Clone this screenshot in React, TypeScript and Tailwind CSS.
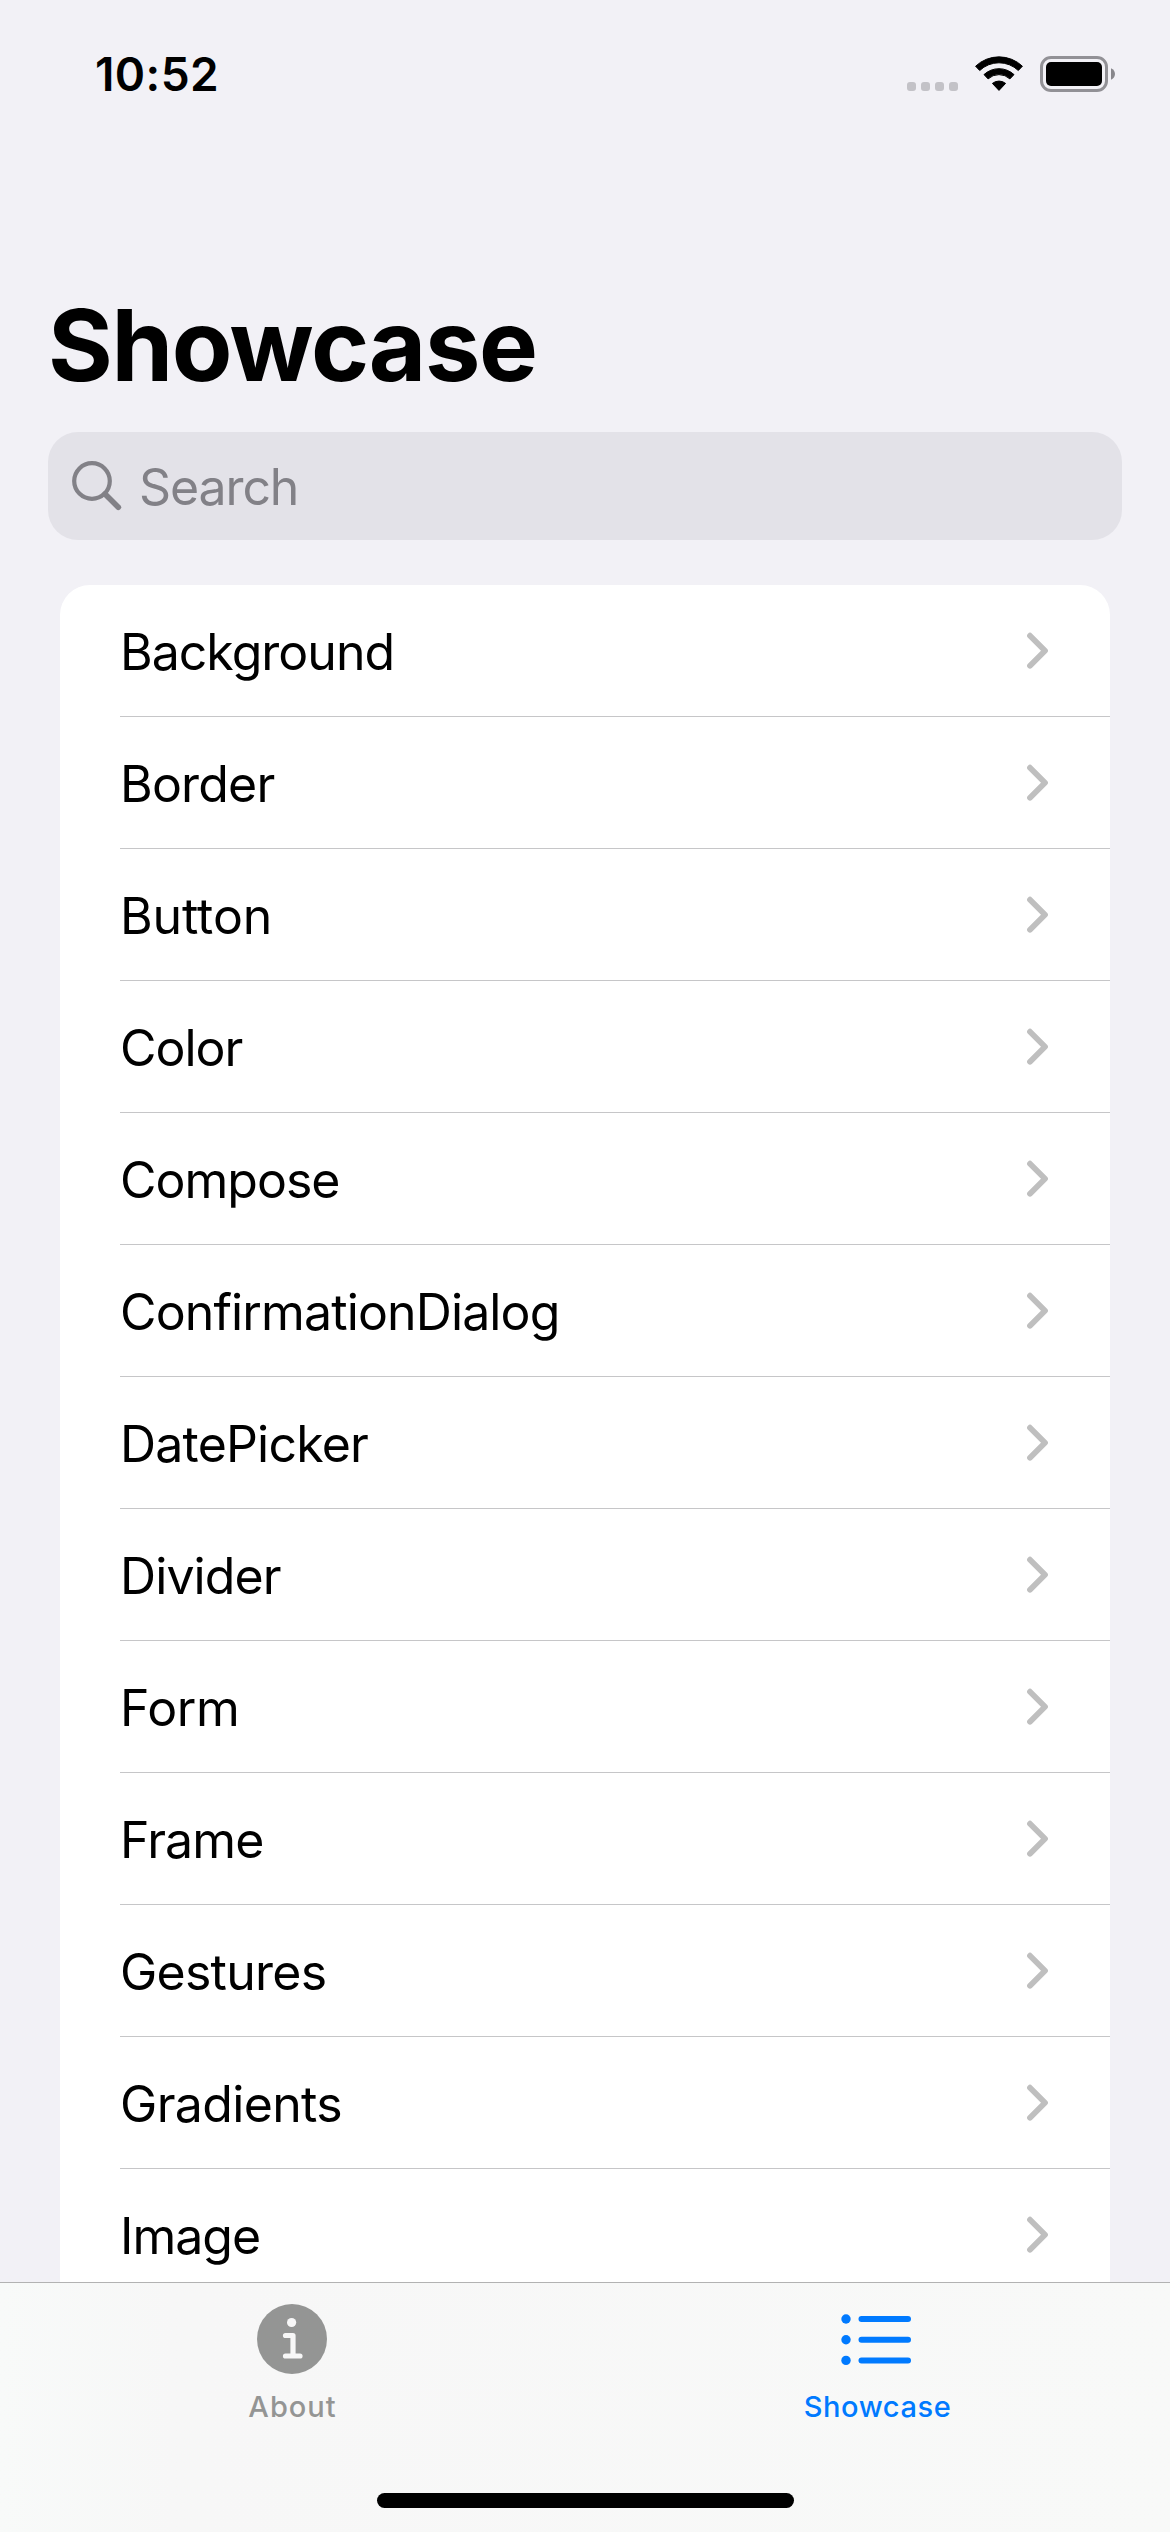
const rows = [
  { label: "Background", tracking: "tracking-[-1px]" },
  { label: "Border", tracking: "tracking-[-0.8px]" },
  { label: "Button", tracking: "tracking-[-0.1px]" },
  { label: "Color", tracking: "tracking-[-1px]" },
  { label: "Compose", tracking: "tracking-[-1px]" },
  { label: "ConfirmationDialog", tracking: "tracking-[-0.87px]" },
  { label: "DatePicker", tracking: "tracking-[-0.8px]" },
  { label: "Divider", tracking: "tracking-[-0.9px]" },
  { label: "Form", tracking: "tracking-[-0.4px]" },
  { label: "Frame", tracking: "tracking-[-0.9px]" },
  { label: "Gestures", tracking: "tracking-[-0.75px]" },
  { label: "Gradients", tracking: "tracking-[-0.65px]" },
  { label: "Image", tracking: "tracking-[-1px]" },
];

function StatusBar() {
  return (
    <div className="flex h-[141px] shrink-0 items-start justify-between pl-[95px] pr-[55px]">
      <div className="mt-[44px] text-[46px] font-semibold leading-[60px] tracking-[0.4px]">10:52</div>
      <div className="mt-[55px] flex h-[37px]">
        <div className="mt-[27px] flex gap-[5px]">
          {[0, 1, 2, 3].map((i) => (
            <span key={i} className="size-[9px] rounded-[3px] bg-[#c3c2c7]" />
          ))}
        </div>
        <svg className="ml-[17px] h-[37px] w-[48px]" viewBox="0 0 48 37">
          <path d="M0.6 11.2A34 34 0 0 1 47.4 11.2L43.3 15.5A28 28 0 0 0 4.7 15.5Z" stroke="#000" strokeWidth="1" strokeLinejoin="round" />
          <path d="M9 19.6A22 22 0 0 1 39 19.6L34.9 23.9A16 16 0 0 0 13.1 23.9Z" stroke="#000" strokeWidth="1" strokeLinejoin="round" />
          <path d="M17.4 28.4A10.5 10.5 0 0 1 30.6 28.4L24 35.4Z" stroke="#000" strokeWidth="1" strokeLinejoin="round" />
        </svg>
        <svg className="ml-[17px] h-[37px] w-[75px]" viewBox="0 0 75 37">
          <rect x="1.5" y="2.5" width="65" height="33" rx="9.5" fill="none" stroke="#929196" strokeWidth="3" />
          <rect x="6" y="7" width="56" height="24" rx="5" />
          <path d="M71 13.3C73.4 14.3 75 16.5 75 19S73.4 23.7 71 24.7Z" fill="#88878c" />
        </svg>
      </div>
    </div>
  );
}

function SearchField() {
  return (
    <div className="mx-12 mt-[27px] flex h-[108px] shrink-0 items-center rounded-[30px] bg-[#e3e2e8] text-[#828187]">
      <svg className="ml-6 h-[52px] w-[50px]" viewBox="0 0 50 52" fill="none" stroke="currentColor">
        <circle cx="20" cy="21" r="17.8" strokeWidth="4.2" />
        <path d="M33 34L46.3 47.3" strokeWidth="5.6" strokeLinecap="round" />
      </svg>
      <span className="ml-[17px] mt-[2px] text-[50px] leading-[60px] tracking-[-1.1px]">Search</span>
    </div>
  );
}

function TabBar() {
  return (
    <nav className="grid h-[250px] shrink-0 grid-cols-2 border-t border-[#b2b2b2] bg-linear-to-r from-[#f8faf9] via-[#f7f7f7] via-15% to-[#f8f9f8] text-[29px] font-medium leading-[36px]">
      <div className="flex flex-col items-center pt-[21px] text-[#949594]">
        <svg className="mr-px size-[70px]" viewBox="0 0 70 70">
          <circle cx="35" cy="35" r="35" fill="currentColor" />
          <circle cx="34.6" cy="18.5" r="4.6" fill="#f7f7f7" />
          <path d="M28.5 31.5H36V52M28.5 52H43" fill="none" stroke="#f7f7f7" strokeWidth="5.2" strokeLinecap="round" strokeLinejoin="round" />
        </svg>
        <span className="mt-[15px] tracking-[1px]">About</span>
      </div>
      <div className="flex flex-col items-center pt-[21px] text-[#007aff]">
        <svg className="mr-[4px] size-[70px]" viewBox="0 0 70 70" fill="currentColor">
          <circle cx="5" cy="15" r="4.7" />
          <circle cx="5" cy="35.7" r="4.7" />
          <circle cx="5" cy="56.4" r="4.7" />
          <rect x="17.5" y="12" width="52.5" height="6" rx="3" />
          <rect x="17.5" y="32.7" width="52.5" height="6" rx="3" />
          <rect x="17.5" y="53.4" width="52.5" height="6" rx="3" />
        </svg>
        <span className="mt-[15px] tracking-[0.6px]">Showcase</span>
      </div>
    </nav>
  );
}

export default function App() {
  return (
    <div className="relative flex h-[2532px] w-[1170px] flex-col overflow-hidden bg-[#f2f1f6] font-['Inter',sans-serif] text-black">
      <StatusBar />
      <h1 className="ml-12 mt-[144px] h-[120px] shrink-0 text-[99px] font-bold leading-[120px] tracking-[-1.4px]">Showcase</h1>
      <SearchField />
      <main className="mx-[60px] mt-[45px] min-h-0 flex-1 overflow-hidden rounded-t-[30px] bg-white">
        {rows.map((row) => (
          <div key={row.label} className="ml-[60px] flex h-[132px] items-center justify-between border-b border-[#c6c6c8] pr-[61px]">
            <span className={"mt-[3px] text-[50px] leading-[60px] " + row.tracking}>{row.label}</span>
            <svg className="h-[37px] w-[23px]" viewBox="0 0 23 37" fill="none" stroke="#bfbfbf" strokeWidth="5.8" strokeLinecap="round" strokeLinejoin="round">
              <path d="M4 3.7L19 18.7L4 33.7" />
            </svg>
          </div>
        ))}
      </main>
      <TabBar />
      <div className="absolute bottom-6 left-[377px] h-[15px] w-[417px] rounded-full bg-black" />
    </div>
  );
}
